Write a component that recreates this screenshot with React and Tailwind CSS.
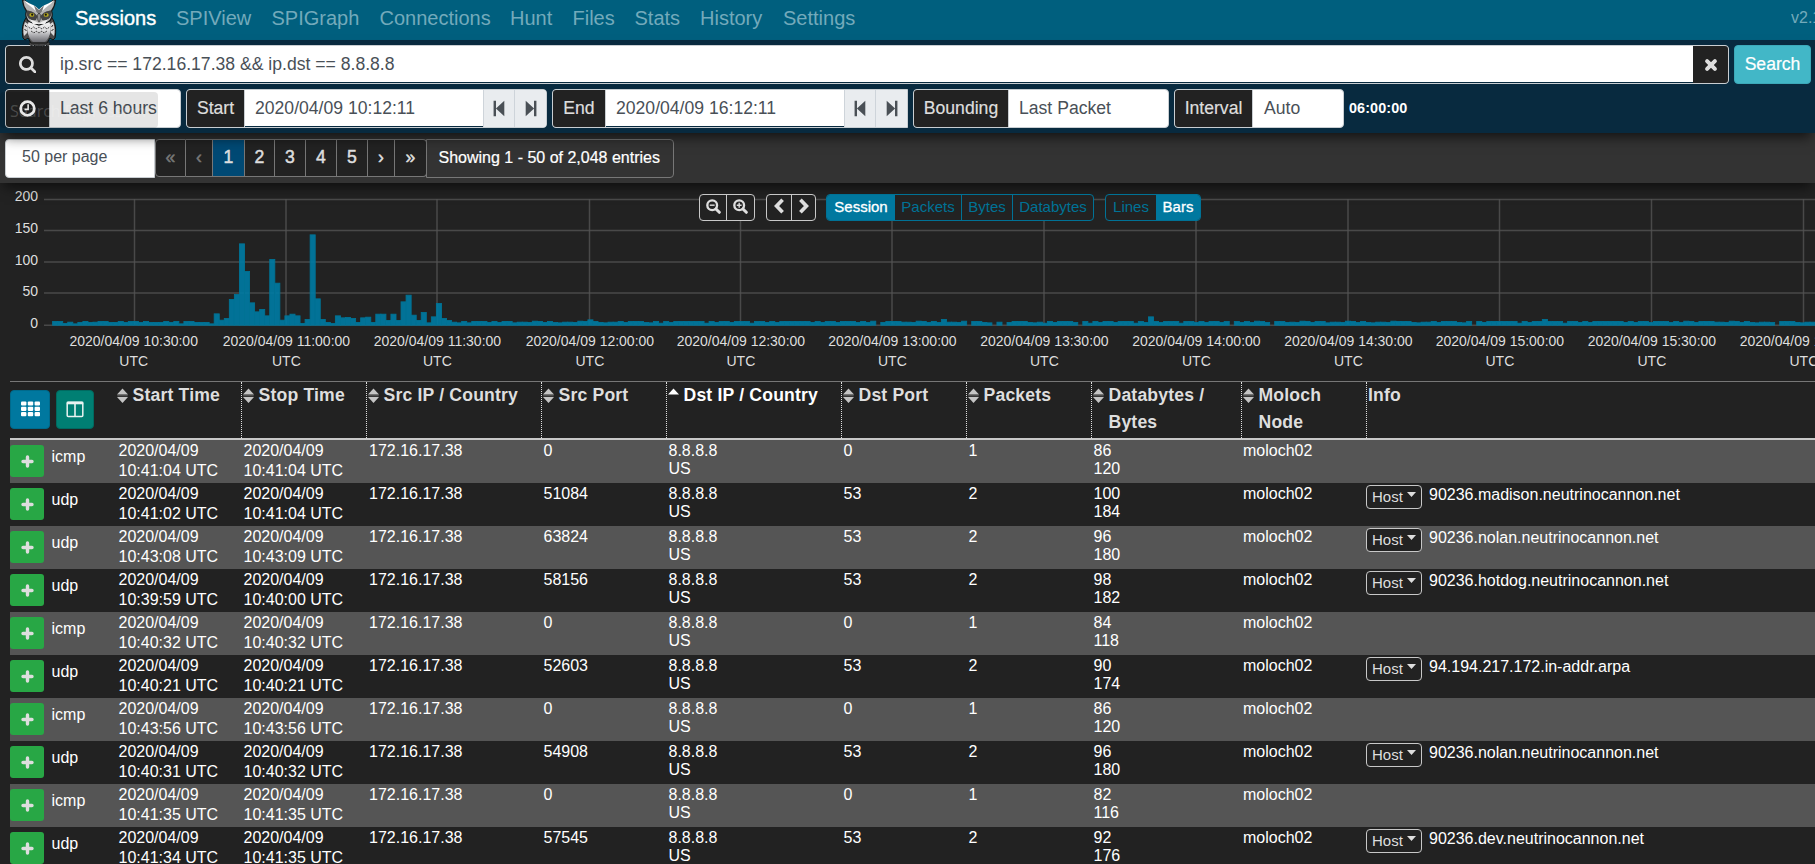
import React from "react";

const NAV = [
  ["Sessions", "w-[81px]"],
  ["SPIView", "w-[75.500px]"],
  ["SPIGraph", "w-[88px]"],
  ["Connections", "w-[110.500px]"],
  ["Hunt", "w-[42.500px]"],
  ["Files", "w-[42px]"],
  ["Stats", "w-[45.500px]"],
  ["History", "w-[63px]"],
  ["Settings", "w-[73px]"],
];

const SearchIcon = () => (
  <svg width="17.5" height="17.5" viewBox="0 128 1664 1664" fill="#dedede">
    <path d="M1152 832q0-185-131.5-316.5t-316.5-131.5-316.5 131.5-131.5 316.5 131.5 316.5 316.5 131.5 316.5-131.5 131.5-316.5zm512 832q0 52-38 90t-90 38q-54 0-90-38l-343-342q-179 124-399 124-143 0-273.5-55.5t-225-150-150-225-55.5-273.5 55.5-273.5 150-225 225-150 273.5-55.5 273.5 55.5 225 150 150 225 55.5 273.5q0 220-124 399l343 343q37 37 37 90z" />
  </svg>
);

const ZoomIcon = ({ plus }) => (
  <svg width="15" height="15" viewBox="0 0 16 16" fill="none" stroke="#dedede" className="-mt-[2px]">
    <circle cx="6.6" cy="6.6" r="5.2" strokeWidth="2.5" />
    <path d="M10.6 10.6l3.6 3.6" strokeWidth="3.2" strokeLinecap="round" />
    <path d={plus ? "M4 6.6h5.2M6.600 4v5.2" : "M4 6.6h5.2"} strokeWidth="1.5" />
  </svg>
);

const ClockIcon = () => (
  <svg width="17" height="17" viewBox="0 0 16 16" fill="none" stroke="#e8e8e8" className="relative z-20">
    <circle cx="8" cy="8" r="6.4" strokeWidth="2.6" />
    <path d="M8.6 4v4.8H5.2" strokeWidth="1.5" />
  </svg>
);

const StepIcon = ({ forward }) => (
  <svg width="12" height="17" viewBox="0 0 11 16" fill="#4a5056" className={forward ? "rotate-180" : ""}>
    <path d="M0.4 0.8h2.300v14.4h-2.300zM2.6 8l7.900-7.300v14.600z" />
  </svg>
);

const TimesIcon = () => (
  <svg width="14" height="14" viewBox="0 0 14 14" stroke="#dedede" strokeWidth="4" strokeLinecap="round">
    <path d="M3.1 3.1l7.8 7.8M10.9 3.1l-7.8 7.8" />
  </svg>
);

const ChevronIcon = ({ right }) => (
  <svg width="12" height="16" viewBox="0 0 12 16" fill="none" stroke="#dedede" strokeWidth="3.7" className={right ? "-mt-[3px] rotate-180" : "-mt-[3px]"}>
    <path d="M9.6 1.8L3.600 8l6 6.2" />
  </svg>
);

const SortIcon = ({ asc }) => (
  <svg width="11" height="16" viewBox="0 0 11 16" className="mt-[5.500px] block shrink-0">
    <path d="M5.5 0.5L11 6.6H0z" fill={asc ? "#fff" : "#c4c4c4"} />
    {!asc && <path d="M0.3 7.8h10.4" stroke="#6b6b6b" strokeWidth="0.9" />}
    {!asc && <path d="M0 9h11L5.5 15.1z" fill="#c4c4c4" />}
  </svg>
);

const ThIcon = () => (
  <svg width="19" height="16" viewBox="0 0 19 16" fill="#fff" className="-mt-[2px]">
    {[0, 6.8, 13.6].map((x) =>
      [0.4, 5.7, 11].map((y) => <rect key={x + "-" + y} x={x} y={y} width="5.4" height="4.2" rx="1" />)
    )}
  </svg>
);

const ColumnsIcon = () => (
  <svg width="18" height="17" viewBox="0 0 18 17" fill="none" stroke="#e9f3f1">
    <rect x="1.2" y="1.2" width="15.6" height="14.2" rx="1" strokeWidth="1.5" />
    <path d="M0.8 2h16.4" strokeWidth="2.6" />
    <path d="M9 2v13.4" strokeWidth="1.6" />
  </svg>
);

const Owl = () => (
  <svg width="38" height="48" viewBox="0 0 38 48" className="absolute left-[20px] top-0 z-20">
    <defs>
      <linearGradient id="belly" x1="0" y1="0" x2="0" y2="1">
        <stop offset="0" stopColor="#f6f6f6" />
        <stop offset="0.45" stopColor="#dcdcde" />
        <stop offset="1" stopColor="#6c6c72" />
      </linearGradient>
    </defs>
    <path d="M11 41l-2 3 2 2 3-1 2 2 3-2 3 2 3-2 3 1 2-2-2-3z" fill="#444" stroke="#15181a" strokeWidth="1" strokeDasharray="2 1" />
    <path d="M6 18C2.500 23 1.500 30 3 38l2 2 3-2 3 5h16l3-5 3 2 2-2c1.500-8 .5-15-3-20z" fill="#4a4a4a" stroke="#101010" />
    <path d="M5 22c-2 5-2 10-1 14l3-3 1-9zM33 22c2 5 2 10 1 14l-3-3-1-9z" fill="#d8d8d8" />
    <path d="M5 25l1.500 2M4.500 29l2 2M33 25l-1.500 2M33.500 29l-2 2M8 34l1.500 3M30 34l-1.500 3" stroke="#222" strokeWidth="1" />
    <path d="M9 21c-3 7-2 16 4 21h12c6-5 7-14 4-21z" fill="url(#belly)" />
    <path d="M8.500 27l2.500 2 2.500-2 2.500 2 3-2 3 2 2.500-2 2.500 2 2.500-2M11 31l3 2 2-2 3 2 3-2 2 2 3-2" fill="none" stroke="#444" strokeWidth="1" strokeDasharray="2 1" />
    <path d="M2.500 0C3 6 5 9 6.500 11 5 15 6 20 10 22c3 1 6 2 9 3 3-1 6-2 9-3 4-2 5-7 3.500-11C33 9 35 6 35.500 0h-2C31 4 24 6.500 19 12 14 6.500 7 4 4.500 0z" fill="#b4b4b4" stroke="#16191a" strokeWidth="1.300" />
    <path d="M6.500 10.500c4 0 9 2 11 6l-1.500 3.500c-4 1-8-1-9-4.500zM31.500 10.500c-4 0-9 2-11 6l1.500 3.500c4 1 8-1 9-4.500z" fill="#444" />
    <path d="M3.500 0C7 5 14 7.500 19 15c5-7.500 12-10 15.500-15-4 3-12 5-15.500 9.500C15.500 5 7.500 3 3.500 0z" fill="#fff" />
    <path d="M14 5.500l5 4.500 5-4.500-2 6-3 3.500-3-3.500z" fill="#777" />
    <ellipse cx="11.800" cy="14.900" rx="2.500" ry="1.900" fill="#b5a81c" />
    <ellipse cx="26.200" cy="14.900" rx="2.500" ry="1.900" fill="#b5a81c" />
    <circle cx="12.200" cy="14.700" r="1.100" fill="#111" />
    <circle cx="25.800" cy="14.700" r="1.100" fill="#111" />
    <path d="M17.300 15l1.700-2 1.700 2-.5 5-1.200 2-1.200-2z" fill="#8d8d8d" stroke="#222" strokeWidth=".6" />
    <path d="M10 19.500l6 2 3 2 3-2 6-2-3 4.500H13z" fill="#ededed" />
  </svg>
);

const LEAD = [
  11, 11, 5, 9, 4, 8, 11, 8, 9, 11, 11, 8, 8, 11, 8, 11, 11, 8, 11, 8, 8, 8, 11, 8, 11, 4, 11, 11, 8, 8, 8, 4, 34, 15,
  20, 77, 92, 244, 161, 67, 40, 47, 28, 197, 126, 15, 28, 33, 28, 5, 17, 271, 79, 17, 8, 5, 28, 22, 23, 20, 8, 22, 24,
  8, 33, 33, 14, 33, 14, 70, 90, 30, 14, 38, 7, 25, 65, 20, 14, 9, 7, 11, 7, 11, 11, 11, 8, 11,
];
const TAIL = [8, 11, 11, 8, 11, 12, 8, 11, 7, 11, 11, 11, 8, 9, 11, 8, 11, 11, 9, 6, 11, 11, 8];
const SPECIAL = { 106: 16, 163: 0, 172: 11, 176: 17, 181: 0, 186: 0, 188: 0, 203: 0, 217: 25, 233: 0, 241: 0, 281: 0, 295: 17, 341: 0 };
const BARS = Array.from({ length: 350 }, (_, i) =>
  i in SPECIAL ? SPECIAL[i] : i < LEAD.length ? LEAD[i] : TAIL[(i * 5 + Math.floor(i / 7)) % TAIL.length]
);
const TICKS = [
  [134.5, "10:30:00"], [286, "11:00:00"], [437, "11:30:00"], [589.5, "12:00:00"], [740.5, "12:30:00"], [892, "13:00:00"],
  [1044, "13:30:00"], [1196, "14:00:00"], [1348, "14:30:00"], [1499.5, "15:00:00"], [1651.5, "15:30:00"], [1803.5, "16:00:00"],
];

const Chart = () => (
  <svg width="1815" height="198" viewBox="0 183 1815 198" className="block" fontFamily="Liberation Sans, Arial, sans-serif" fontSize="14" fill="#dedede">
    {[199.5, 230.5, 262, 293, 325.3].map((y) => (
      <path key={y} d={`M44 ${y}H1815`} stroke="#545454" strokeOpacity="0.8" strokeWidth="1.6" />
    ))}
    {TICKS.map(([x]) => (
      <path key={x} d={`M${x} 199V325`} stroke="#545454" strokeOpacity="0.8" strokeWidth="1.5" />
    ))}
    {BARS.map((v, i) =>
      v ? (
        <rect key={i} x={52.6 + i * 5.05} y={325.2 - v / 3} width="5.05" height={v / 3} fill="#007aa2" fillOpacity="0.92" stroke="#007294" strokeWidth="0.9" />
      ) : null
    )}
    {[["200", 201], ["150", 233], ["100", 264.5], ["50", 295.5], ["0", 327.5]].map(([t, y]) => (
      <text key={t} x="38" y={y} textAnchor="end">{t}</text>
    ))}
    {TICKS.map(([x, t], i) => (
      <g key={t} textAnchor="middle">
        <text x={i ? x + 0.4 : x - 0.8} y="346">2020/04/09 {t}</text>
        <text x={i ? x + 0.4 : x - 0.8} y="365.5">UTC</text>
      </g>
    ))}
  </svg>
);

const HEADS = [
  ["Start Time"], ["Stop Time"], ["Src IP / Country"], ["Src Port"], ["Dst IP / Country"], ["Dst Port"], ["Packets"],
  ["Databytes /", "Bytes"], ["Moloch", "Node"],
];
const ROWS = [
  ["icmp", "10:41:04", "10:41:04", "0", "0", 1, 86, 120, null],
  ["udp", "10:41:02", "10:41:04", "51084", "53", 2, 100, 184, "90236.madison.neutrinocannon.net"],
  ["udp", "10:43:08", "10:43:09", "63824", "53", 2, 96, 180, "90236.nolan.neutrinocannon.net"],
  ["udp", "10:39:59", "10:40:00", "58156", "53", 2, 98, 182, "90236.hotdog.neutrinocannon.net"],
  ["icmp", "10:40:32", "10:40:32", "0", "0", 1, 84, 118, null],
  ["udp", "10:40:21", "10:40:21", "52603", "53", 2, 90, 174, "94.194.217.172.in-addr.arpa"],
  ["icmp", "10:43:56", "10:43:56", "0", "0", 1, 86, 120, null],
  ["udp", "10:40:31", "10:40:32", "54908", "53", 2, 96, 180, "90236.nolan.neutrinocannon.net"],
  ["icmp", "10:41:35", "10:41:35", "0", "0", 1, 82, 116, null],
  ["udp", "10:41:34", "10:41:35", "57545", "53", 2, 92, 176, "90236.dev.neutrinocannon.net"],
];
const GRID = "grid grid-cols-[107px_125px_125px_175px_125px_175px_125px_125px_150px_125px_1fr]";

const Row = ({ r, odd }) => (
  <div className={`${GRID} h-[43px] text-[16px] leading-[18px] text-white ${odd ? "bg-[#555]" : ""}`}>
    <div className="flex">
      <div className="mt-[5px] flex h-8 w-[34px] items-center justify-center rounded-[3px] bg-[#28a745]">
        <svg width="13" height="13" viewBox="0 0 13 13" stroke="#dedede" strokeWidth="3.4" strokeLinecap="round">
          <path d="M6.500 2v9M2 6.500h9" />
        </svg>
      </div>
      <div className="ml-[7.500px] mt-[8px]">{r[0]}</div>
    </div>
    {[r[1], r[2]].map((t, i) => (
      <div key={i} className="pl-[1.500px] pt-px leading-[20px]">
        <div>2020/04/09</div>
        <div>{t} UTC</div>
      </div>
    ))}
    <div className="pl-[2px] pt-[2px]">172.16.17.38</div>
    <div className="pl-[1.500px] pt-[2px]">{r[3]}</div>
    <div className="pl-[1.500px] pt-[2px]"><div>8.8.8.8</div><div>US</div></div>
    <div className="pl-[1.500px] pt-[2px]">{r[4]}</div>
    <div className="pl-[1.500px] pt-[2px]">{r[5]}</div>
    <div className="pl-[1.500px] pt-[2px]"><div>{r[6]}</div><div>{r[7]}</div></div>
    <div className="pl-[1px] pt-[2px]">moloch02</div>
    <div className="flex">
      {r[8] && (
        <>
          <div className="-ml-px mt-[2px] flex h-6 w-[56px] items-center rounded-[4px] border border-[#c8c8c8] bg-[#222] pb-px pl-[5px] text-[15px] text-[#dedede]">
            Host
            <svg width="9" height="5" viewBox="0 0 9 5" className="-mt-1 ml-1"><path d="M0 0h9L4.500 5z" fill="#dedede" /></svg>
          </div>
          <div className="ml-[7px] mt-[3px]">{r[8]}</div>
        </>
      )}
    </div>
  </div>
);

const Label = ({ children, w }) => (
  <div className={`flex h-full items-center justify-center border-r border-[#c9ced2] bg-[#222] text-[#dedede] [-webkit-text-stroke:0.2px_#dedede] ${w}`}>{children}</div>
);
const GROUP = "flex h-[39px] shrink-0 overflow-hidden rounded-[4px] border border-[#c9ced2] bg-white text-[17.6px]";
const Steps = () => (
  <>
    <div className="flex w-[31px] items-center justify-center border-l border-[#ced4da] bg-[#e9ecef]"><StepIcon /></div>
    <div className="flex w-[32px] items-center justify-center border-l border-[#ced4da] bg-[#e9ecef]"><StepIcon forward /></div>
  </>
);

export default function App() {
  return (
    <div className="relative h-[864px] w-[1815px] overflow-hidden bg-[#222] font-['Liberation_Sans',Arial,sans-serif] text-[#495057]">
      <Owl />
      <nav className="flex h-10 items-center gap-[20px] bg-[#005f7e] pb-[5px] pl-[75px] text-[20px] text-[#73aabb]">
        {NAV.map(([n, w], i) => (
          <div key={n} className={`whitespace-nowrap ${w} ${i === 0 ? "text-white [-webkit-text-stroke:0.4px_white]" : ""}`}>{n}</div>
        ))}
        <div className="ml-auto w-[24px] overflow-hidden whitespace-nowrap text-[16px]">v2.1</div>
      </nav>

      <section className="relative z-10 h-[93px] bg-[#082a3f] pl-[5px] pt-[5px] shadow-[0_8px_12px_-4px_rgba(0,0,0,0.65)]">
        <div className="flex gap-[5px]">
          <div className={`${GROUP} w-[1724px]`}>
            <Label w="w-[44px]"><SearchIcon /></Label>
            <div className="flex flex-1 items-center border-b-[1.500px] border-[#082a3f] pl-[10px]">ip.src == 172.16.17.38 &amp;&amp; ip.dst == 8.8.8.8</div>
            <div className="flex w-[35px] items-center justify-center bg-[#222]"><TimesIcon /></div>
          </div>
          <div className="flex h-[39px] w-[77px] items-center justify-center rounded-[4px] border border-[#3ca9b9] bg-[#42b7c7] text-[17.6px] text-white [-webkit-text-stroke:0.2px_white]">Search</div>
        </div>
        <div className="mt-[5px] flex items-center gap-[5px]">
          <div className={`${GROUP} w-[176px]`}>
            <Label w="w-[44px]"><ClockIcon /></Label>
            <div className="flex items-center pl-[10px]">Last 6 hours</div>
          </div>
          <div className={`${GROUP} w-[361px]`}>
            <Label w="w-[58px]">Start</Label>
            <div className="flex flex-1 items-center border-b border-[#082a3f] pl-[10px]">2020/04/09 10:12:11</div>
            <Steps />
          </div>
          <div className={`${GROUP} w-[356px] rounded-r-none`}>
            <Label w="w-[53px]">End</Label>
            <div className="flex flex-1 items-center border-b border-[#082a3f] pl-[10px]">2020/04/09 16:12:11</div>
            <Steps />
          </div>
          <div className={`${GROUP} w-[256px]`}>
            <Label w="w-[95px]">Bounding</Label>
            <div className="flex items-center pl-[10px]">Last Packet</div>
          </div>
          <div className={`${GROUP} w-[170px]`}>
            <Label w="w-[78px]">Interval</Label>
            <div className="flex items-center pl-[11px]">Auto</div>
          </div>
          <div className="text-[14.400px] font-bold text-white [letter-spacing:0.1px]">06:00:00</div>
        </div>
        <div className="absolute left-0 top-[52px] flex h-[36px] w-[158px] items-center whitespace-nowrap rounded-[4px] bg-black/10 pl-[10px] pt-[2px] font-['Open_Sans',sans-serif] text-[16px] text-white/20">
          Search Expression
        </div>
      </section>

      <section className="relative flex h-[50px] bg-[#333] pl-[5px] pt-[6px] shadow-[0_8px_12px_-4px_rgba(0,0,0,0.6)]">
        <div className="flex h-[39px] w-[150px] items-center rounded-l-[4px] border border-[#c9ced2] bg-white pb-[3px] pl-[16px] text-[16px]">50 per page</div>
        <div className="flex h-[38px] text-[17.600px] text-[#dedede]">
          {[
            ["«", "w-[31px] text-[#777] rounded-l-[4px] border-l"], ["‹", "w-[27px] text-[#777]"], ["1", "w-[32px] bg-[#004974]!"],
            ["2", "w-[30px]"], ["3", "w-[31px]"], ["4", "w-[31px]"], ["5", "w-[31px]"], ["›", "w-[27px]"], ["»", "w-[32px] rounded-r-[4px]"],
          ].map(([t, c]) => (
            <div key={t} className={`flex items-center justify-center border-y border-r border-[#777] bg-[#222] pb-px [-webkit-text-stroke:0.5px_currentColor] ${c}`}>{t}</div>
          ))}
        </div>
        <div className="-ml-px flex h-[39px] w-[248px] items-center rounded-r-[4px] border border-[#777] pb-px pl-[11.500px] text-[16px] text-white [-webkit-text-stroke:0.2px_white]">
          Showing 1 - 50 of 2,048 entries
        </div>
      </section>

      <section className="h-[198px]">
        <Chart />
        <div className="absolute left-[699px] top-[194px] z-10 flex h-[27px] text-[15px] text-[#007296]">
          <div className="flex w-[56px] rounded-[4px] border border-[#c8c8c8] bg-[#222]">
            <div className="flex w-[27px] items-center justify-center border-r border-[#c8c8c8]"><ZoomIcon /></div>
            <div className="flex flex-1 items-center justify-center"><ZoomIcon plus /></div>
          </div>
          <div className="ml-[11px] flex w-[50px] rounded-[4px] border border-[#c8c8c8] bg-[#222]">
            <div className="flex w-[25px] items-center justify-center border-r border-[#c8c8c8]"><ChevronIcon /></div>
            <div className="flex flex-1 items-center justify-center"><ChevronIcon right /></div>
          </div>
          <div className="ml-[10px] flex w-[268px] overflow-hidden rounded-[4px] border border-[#007296] bg-[#222]">
            <div className="flex w-[68px] items-center justify-center bg-[#00789f] text-white [-webkit-text-stroke:0.3px_white]">Session</div>
            <div className="flex w-[67px] items-center justify-center border-r border-[#007296]">Packets</div>
            <div className="flex w-[51px] items-center justify-center border-r border-[#007296]">Bytes</div>
            <div className="flex flex-1 items-center justify-center">Databytes</div>
          </div>
          <div className="ml-[11px] flex w-[96px] overflow-hidden rounded-[4px] border border-[#007296] bg-[#222]">
            <div className="flex w-[50px] items-center justify-center">Lines</div>
            <div className="flex flex-1 items-center justify-center bg-[#00789f] text-white [-webkit-text-stroke:0.3px_white]">Bars</div>
          </div>
        </div>
      </section>

      <main className="pl-[10px]">
        <div className={`${GRID} h-[59px] border-b-2 border-t border-b-[#c8c8c8] border-t-[#777] text-[17.600px] font-bold leading-[27px] text-[#dedede] [letter-spacing:0.18px]`}>
          <div className="flex gap-[6px] pt-[8px]">
            <div className="flex h-[39px] w-[40px] items-center justify-center rounded-[4px] border border-[#006a8c] bg-[#00789f]"><ThIcon /></div>
            <div className="flex h-[39px] w-[38px] items-center justify-center rounded-[4px] border border-[#006a60] bg-[#007f73]"><ColumnsIcon /></div>
          </div>
          {HEADS.map((h, i) => (
            <div key={h[0]} className={`flex gap-[4.500px] whitespace-nowrap border-r border-dotted border-[#dedede] ${i === 0 ? "" : "pl-px"} ${i === 4 ? "text-white" : ""}`}>
              <SortIcon asc={i === 4} />
              <div>{h.map((l) => <div key={l}>{l}</div>)}</div>
            </div>
          ))}
          <div className="pl-[1px]">Info</div>
        </div>
        {ROWS.map((r, i) => <Row key={i} r={r} odd={i % 2 === 0} />)}
      </main>
    </div>
  );
}
